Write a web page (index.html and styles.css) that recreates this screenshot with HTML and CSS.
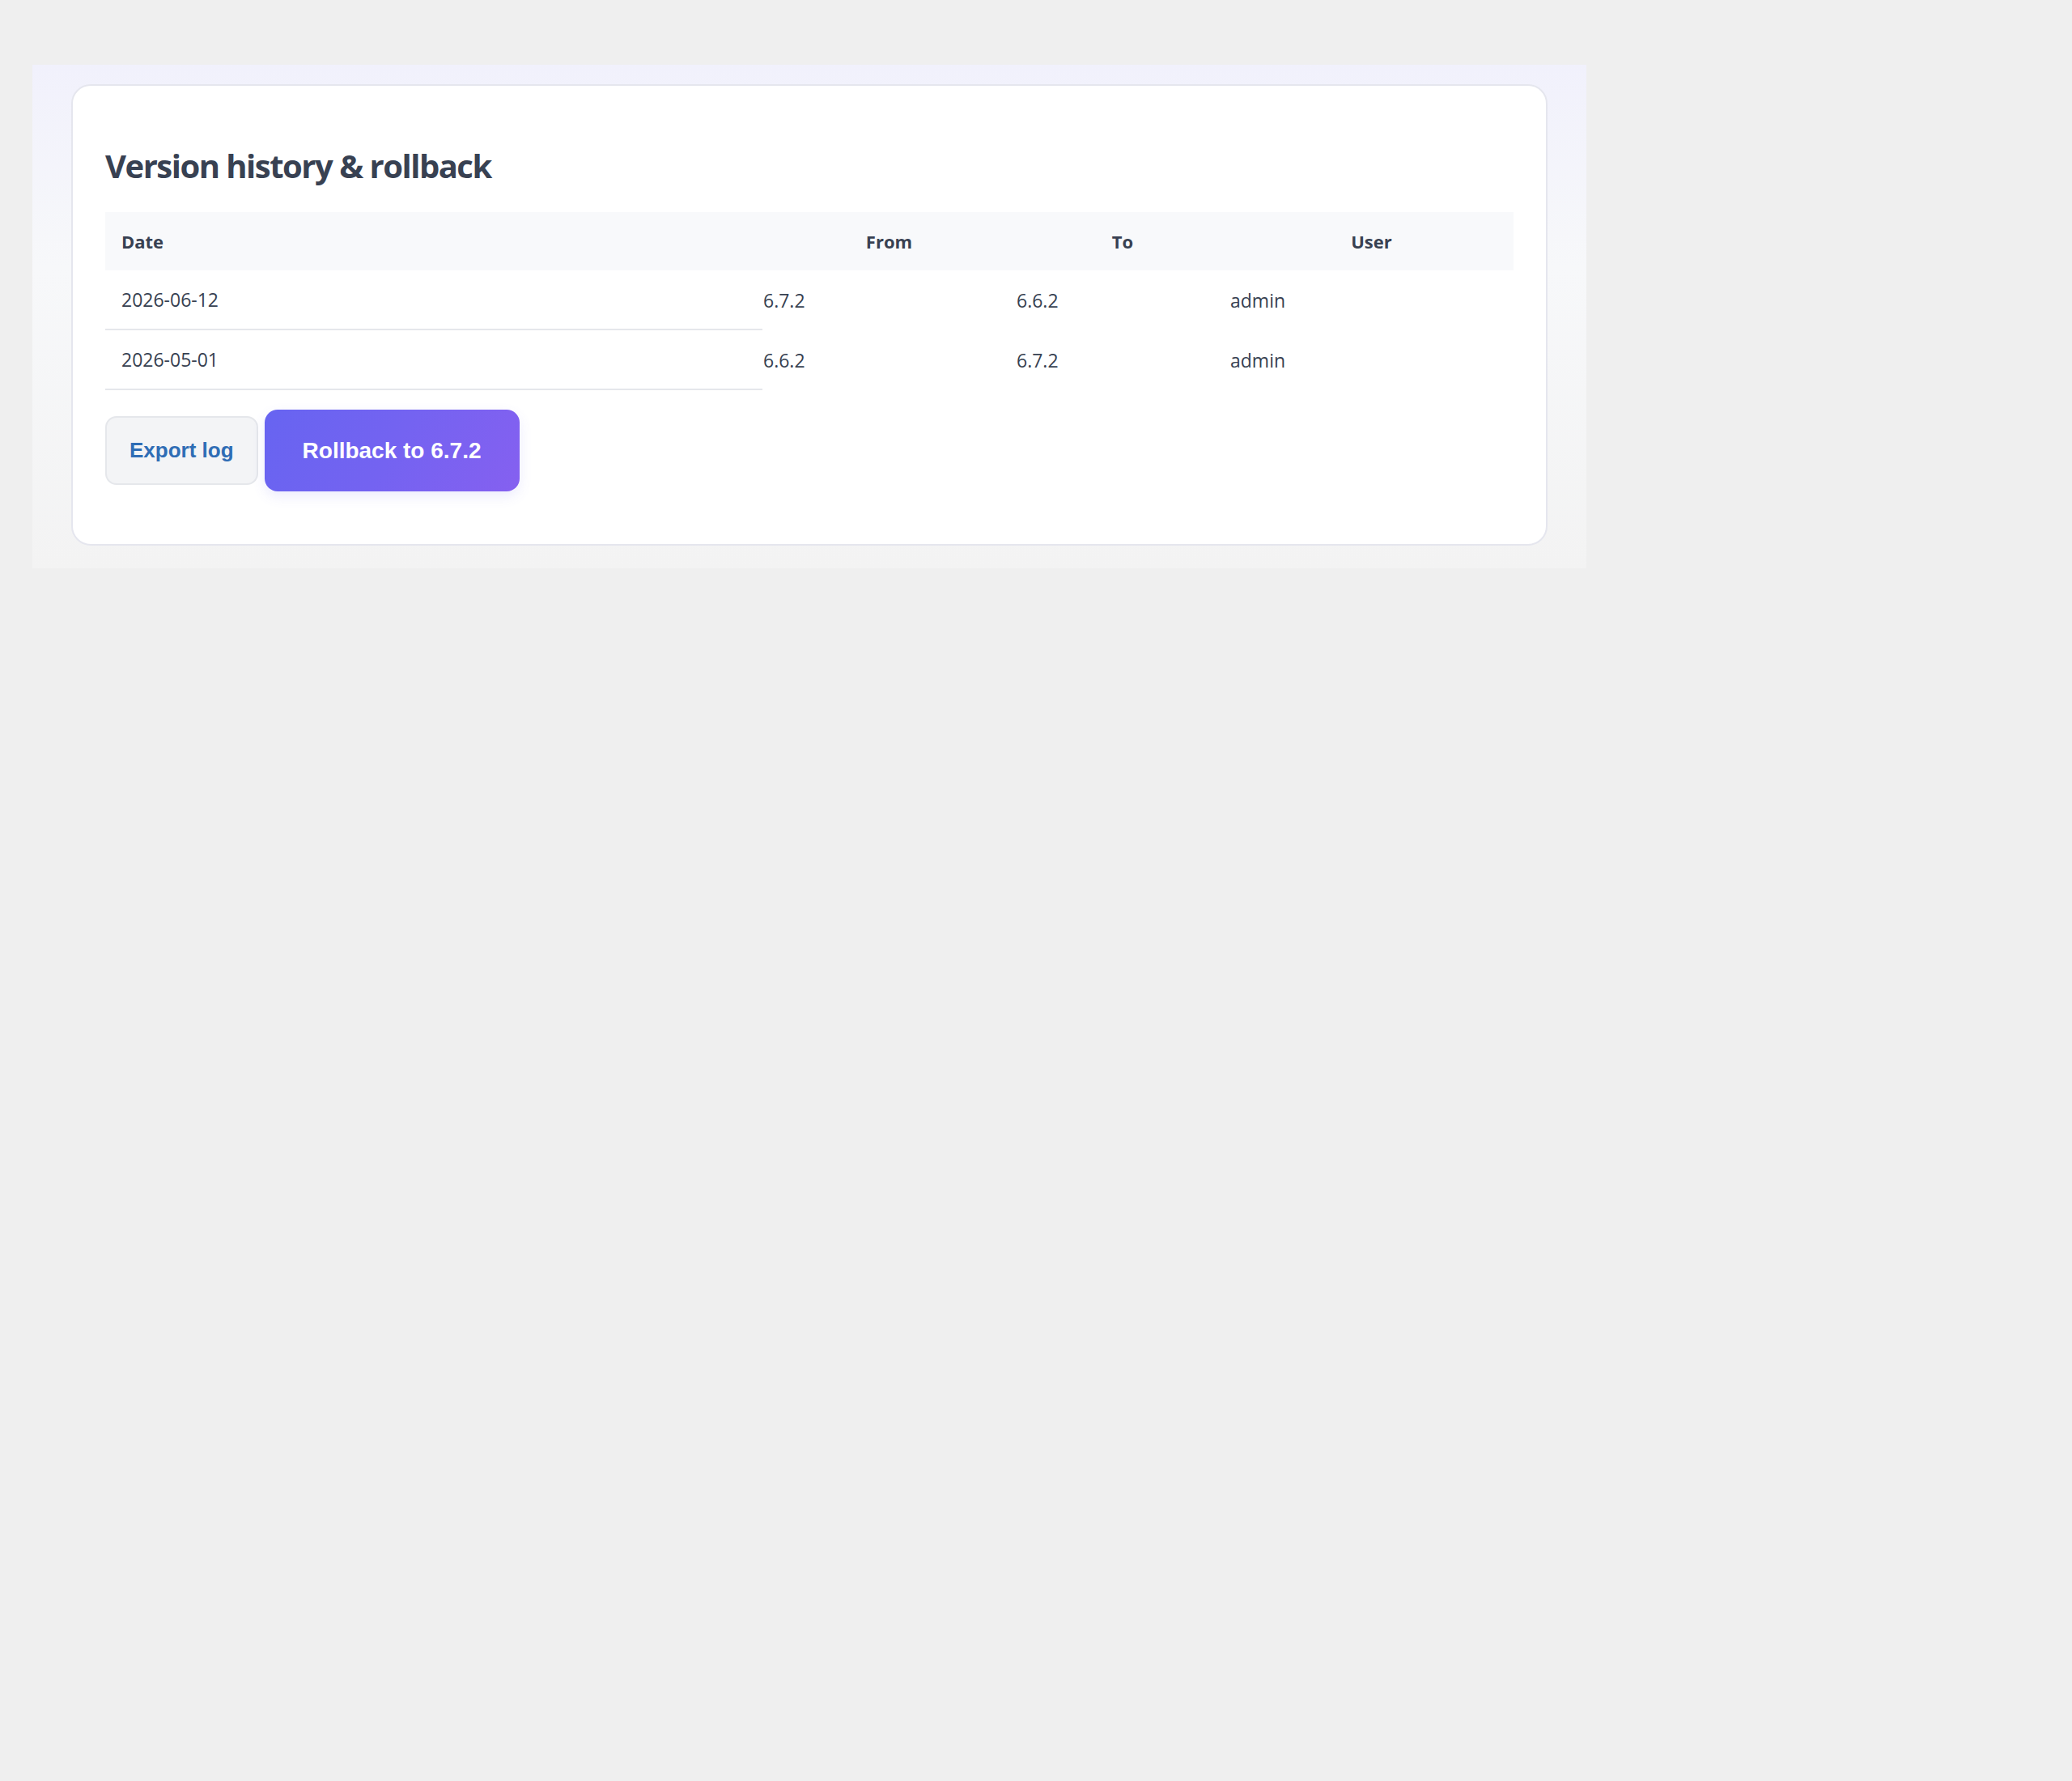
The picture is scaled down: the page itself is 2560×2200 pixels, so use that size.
FILE: index.html
```html
<!DOCTYPE html>
<html lang="en">
<head>
    <meta charset="UTF-8">
    <meta name="viewport" content="width=device-width, initial-scale=1.0">
    <title>Version history</title>

    <link rel="stylesheet" href="styles.css">
</head>
<body>
    <div class="panel">
        <section class="card">
            <h2 class="card-title">Version history &amp; rollback</h2>

            <table class="history">
                <colgroup>
                    <col class="col-date">
                    <col class="col-from">
                    <col class="col-to">
                    <col>
                </colgroup>
                <thead>
                    <tr>
                        <th class="th-date">Date</th>
                        <th>From</th>
                        <th>To</th>
                        <th>User</th>
                    </tr>
                </thead>
                <tbody>
                    <tr>
                        <td>2026-06-12</td>
                        <td>6.7.2</td>
                        <td>6.6.2</td>
                        <td>admin</td>
                    </tr>
                    <tr>
                        <td>2026-05-01</td>
                        <td>6.6.2</td>
                        <td>6.7.2</td>
                        <td>admin</td>
                    </tr>
                </tbody>
            </table>

            <div class="actions">
                <button class="btn btn-secondary">Export log</button>
                <button class="btn btn-primary">Rollback to 6.7.2</button>
            </div>
        </section>
    </div>
</body>
</html>
```

FILE: styles.css
```css
body {
    margin: 0;
    padding: 80px 40px;
    background-color: #efefef;
    font-family: "Open Sans", "Noto Sans", sans-serif;
    color: #374151;
}

.panel {
    width: 1920px;
    box-sizing: border-box;
    padding: 24px 48px 28px;
    background: linear-gradient(180deg, #f1f1fc 0%, #f7f8fa 40%, #f3f3f3 100%);
}

.card {
    background-color: #fff;
    border: 2px solid #e5e6ee;
    border-radius: 24px;
    padding: 40px;
}

.card-title {
    margin: 35px 0 33px;
    font-size: 40px;
    line-height: 48px;
    letter-spacing: -1.5px;
    font-weight: 700;
    color: #384152;
}

.history {
    width: 100%;
    table-layout: fixed;
    border-collapse: separate;
    border-spacing: 0;
}

.col-date {
    width: 812px;
}

.col-from {
    width: 313px;
}

.col-to {
    width: 264px;
}

.history th {
    background-color: #f8f9fb;
    padding: 20px;
    font-size: 22px;
    line-height: 32px;
    font-weight: 700;
    color: #384152;
}

.history .th-date {
    text-align: left;
}

.history td {
    padding: 0 0 0 1px;
    font-size: 23px;
    line-height: 32px;
    vertical-align: middle;
}

.history td:first-child {
    padding: 20px;
    border-bottom: 2px solid #e5e7eb;
}

.actions {
    display: flex;
    align-items: center;
    gap: 8px;
    margin: 24px 0 25px;
}

.btn {
    font-family: "Liberation Sans", Arial, sans-serif;
    font-weight: 700;
    cursor: pointer;
}

.btn-secondary {
    padding: 25px 28px;
    font-size: 26px;
    color: #2f6db5;
    background-color: #f3f4f6;
    border: 2px solid #e5e7eb;
    border-radius: 14px;
}

.btn-primary {
    padding: 35px 47px 34px;
    font-size: 28px;
    color: #fff;
    background: linear-gradient(120deg, #6764f1 0%, #7463f1 50%, #8560f0 100%);
    border: none;
    border-radius: 16px;
    box-shadow: 0 6px 16px rgba(99, 102, 241, 0.12);
}
```
